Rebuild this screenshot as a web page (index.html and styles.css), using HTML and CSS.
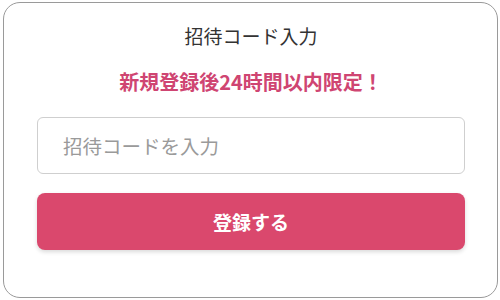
FILE: index.html
```html
<!DOCTYPE html>
<html lang="ja">
<head>
<meta charset="utf-8">
<link rel="stylesheet" href="styles.css">
</head>
<body>
<div class="card">
  <h1 class="title">招待コード入力</h1>
  <p class="notice">新規登録後24時間以内限定！</p>
  <input class="code" type="text" placeholder="招待コードを入力">
  <button class="submit" type="button">登録する</button>
</div>
</body>
</html>
```
FILE: styles.css
```css
html, body {
  margin: 0;
  padding: 0;
  background: #ffffff;
}
body {
  padding: 2px 2px 2px 3px;
  width: 500px;
  height: 300px;
  box-sizing: border-box;
  font-family: "Noto Sans CJK JP", "Noto Sans", sans-serif;
}
.card {
  box-sizing: border-box;
  height: 296px;
  border: 1px solid #9a9a9a;
  border-radius: 17px;
  padding: 0 32px 0 33px;
  display: flex;
  flex-direction: column;
}
.title {
  margin: 20px 0 0;
  height: 26px;
  line-height: 26px;
  font-size: 19px;
  font-weight: 400;
  color: #333333;
  text-align: center;
}
.notice {
  margin: 19px 0 0;
  height: 28px;
  line-height: 28px;
  font-size: 20px;
  font-weight: 700;
  color: #cf4572;
  text-align: center;
}
.code {
  box-sizing: border-box;
  margin: 21px 0 0;
  height: 57px;
  width: 100%;
  border: 1px solid #cfcfcf;
  border-radius: 6px;
  padding: 0 25px;
  font-family: inherit;
  font-size: 19.5px;
  color: #333;
  outline: none;
}
.code::placeholder {
  color: #9a9a9a;
}
.submit {
  box-sizing: border-box;
  margin: 19px 0 0;
  height: 57px;
  width: 100%;
  border: none;
  border-radius: 8px;
  background: #da486d;
  box-shadow: 0 2px 4px rgba(0, 0, 0, 0.15);
  color: #ffffff;
  font-family: inherit;
  font-size: 19px;
  font-weight: 700;
}
```
